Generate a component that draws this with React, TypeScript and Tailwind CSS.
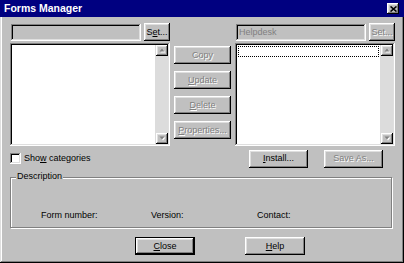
const raised =
  "bg-[#c0c0c0] shadow-[inset_-1px_-1px_#000,inset_1px_1px_#fff,inset_-2px_-2px_#808080,inset_2px_2px_#dfdfdf]";
const sunken =
  "shadow-[inset_-1px_-1px_#fff,inset_1px_1px_#808080,inset_-2px_-2px_#dfdfdf,inset_2px_2px_#000]";
const dim = "text-[#808080] [text-shadow:1px_1px_0_#fff]";

function Btn({
  children,
  w,
  disabled,
  isDefault,
}: {
  children: React.ReactNode;
  w: string;
  disabled?: boolean;
  isDefault?: boolean;
}) {
  return (
    <div className={`${w} h-[18px] ${isDefault ? "border border-black" : ""}`}>
      <div
        className={`${raised} w-full h-full flex items-center justify-center leading-none ${
          disabled ? dim : "text-black"
        }`}
      >
        {children}
      </div>
    </div>
  );
}

function Arrow({ up }: { up?: boolean }) {
  return (
    <div className={`${raised} w-[12px] h-[11px] flex items-center justify-center`}>
      <svg width="7" height="5" viewBox="0 0 7 5">
        <path d={up ? "M1.5 4.5h5L4 1.5z" : "M1.5 1.5h5L4 4.5z"} fill="#fff" />
        <path d={up ? "M0.5 3.5h5L3 0.5z" : "M0.5 0.5h5L3 3.5z"} fill="#808080" />
      </svg>
    </div>
  );
}

function ListBox({ focus }: { focus?: boolean }) {
  return (
    <div className={`${sunken} bg-white h-[103px] p-[2px] flex`}>
      <div className="flex-1 pt-[1px] pl-[1px] pr-[1px]">
        {focus && <div className="h-[11px] border border-dotted border-black" />}
      </div>
      <div className="w-[13px] bg-[#dcdcdc] flex flex-col items-end">
        <Arrow up />
        <div className="flex-1" />
        <Arrow />
      </div>
    </div>
  );
}

function Field({ text }: { text?: string }) {
  return (
    <div
      className={`${sunken} ml-[1px] w-[130px] h-[17px] bg-[#c0c0c0] flex items-center px-[3px] text-[#808080] leading-none`}
    >
      {text}
    </div>
  );
}

export default function App() {
  return (
    <div
      className="w-[404px] h-[263px] bg-[#c0c0c0] flex flex-col text-[9px] text-black shadow-[inset_-1px_-1px_#000,inset_1px_1px_#dfdfdf,inset_-2px_-2px_#808080,inset_2px_2px_#fff]"
      style={{ fontFamily: '"Liberation Sans", Arial, sans-serif' }}
    >
      {/* Title bar */}
      <div className="h-[17px] bg-[#000080] flex items-center pl-[4px] pr-[5px]">
        <span className="text-white font-bold text-[10.5px]">Forms Manager</span>
        <div className={`${raised} ml-auto w-[12px] h-[11px] flex items-center justify-center`}>
          <svg width="7" height="6" viewBox="0 0 7 6">
            <path d="M0.5 0.5l6 5M6.5 0.5l-6 5" stroke="#000" strokeWidth="1.6" />
          </svg>
        </div>
      </div>

      <div className="flex flex-col pl-[10px] pt-[6px]">
        {/* Lists and middle buttons */}
        <div className="flex">
          <div className="w-[160px] flex flex-col">
            <div className="flex items-center gap-[3px] h-[18px]">
              <Field />
              <Btn w="w-[26px]">
                S<u>e</u>t...
              </Btn>
            </div>
            <div className="mt-[2px]">
              <ListBox />
            </div>
          </div>

          <div className="ml-[4px] w-[57px] mt-[23px] flex flex-col gap-[7px]">
            <Btn w="w-[57px]" disabled>
              Copy
            </Btn>
            <Btn w="w-[57px]" disabled>
              <u>U</u>pdate
            </Btn>
            <Btn w="w-[57px]" disabled>
              <u>D</u>elete
            </Btn>
            <Btn w="w-[57px]" disabled>
              <u>P</u>roperties...
            </Btn>
          </div>

          <div className="ml-[4px] w-[160px] flex flex-col">
            <div className="flex items-center gap-[3px] h-[18px]">
              <Field text="Helpdesk" />
              <Btn w="w-[26px]" disabled>
                Set...
              </Btn>
            </div>
            <div className="mt-[2px]">
              <ListBox focus />
            </div>
          </div>
        </div>

        {/* Checkbox + Install / Save As */}
        <div className="flex items-center mt-[3px] h-[19px]">
          <div className="w-[239px] flex items-center">
            <div className={`${sunken} w-[11px] h-[11px] bg-white`} />
            <span className="ml-[3px]">
              Sho<u>w</u> categories
            </span>
          </div>
          <Btn w="w-[59px]">
            <u>I</u>nstall...
          </Btn>
          <div className="ml-[16px]">
            <Btn w="w-[59px]" disabled>
              Save As...
            </Btn>
          </div>
        </div>

        {/* Description group */}
        <div className="relative mt-[9px] w-[382px] h-[51px] border border-[#808080] shadow-[1px_1px_0_#fff,inset_1px_1px_0_#fff] flex items-end pl-[30px] pb-[5px]">
          <span className="absolute left-[5px] -top-[6px] bg-[#c0c0c0] px-[1px] leading-none">
            Description
          </span>
          <span className="w-[110px]">Form number:</span>
          <span className="w-[106px]">Version:</span>
          <span>Contact:</span>
        </div>

        {/* Bottom buttons */}
        <div className="flex mt-[9px] ml-[125px]">
          <Btn w="w-[60px]" isDefault>
            <u>C</u>lose
          </Btn>
          <div className="ml-[50px]">
            <Btn w="w-[60px]">
              <u>H</u>elp
            </Btn>
          </div>
        </div>
      </div>
    </div>
  );
}
